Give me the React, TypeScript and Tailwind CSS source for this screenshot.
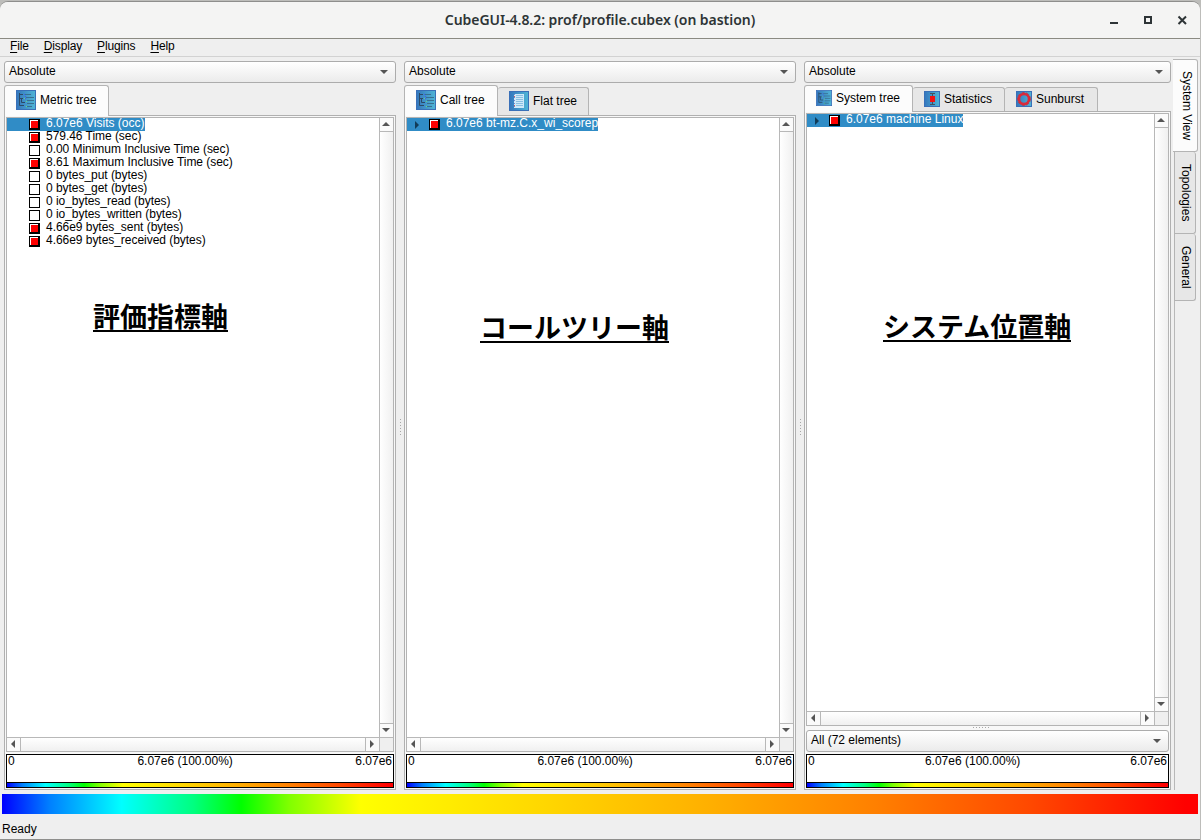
import React from "react";

type Row = { label: string; filled: boolean; selected?: boolean; expandable?: boolean };

const metricRows: Row[] = [
  { label: "6.07e6 Visits (occ)", filled: true, selected: true },
  { label: "579.46 Time (sec)", filled: true },
  { label: "0.00 Minimum Inclusive Time (sec)", filled: false },
  { label: "8.61 Maximum Inclusive Time (sec)", filled: true },
  { label: "0 bytes_put (bytes)", filled: false },
  { label: "0 bytes_get (bytes)", filled: false },
  { label: "0 io_bytes_read (bytes)", filled: false },
  { label: "0 io_bytes_written (bytes)", filled: false },
  { label: "4.66e9 bytes_sent (bytes)", filled: true },
  { label: "4.66e9 bytes_received (bytes)", filled: true },
];
const callRows: Row[] = [{ label: "6.07e6 bt-mz.C.x_wi_scorep", filled: true, selected: true, expandable: true }];
const systemRows: Row[] = [{ label: "6.07e6 machine Linux", filled: true, selected: true, expandable: true }];

const rainbow =
  "bg-[linear-gradient(to_right,#0000ff_0%,#0080ff_4%,#00ffff_10%,#00ff80_16%,#00ff00_20%,#80ff00_24%,#ffff00_30%,#ffd800_45%,#ffb000_59%,#ff8000_73%,#ff4800_86%,#ff0000_99%,#ff0000_100%)]";

function Arrow({ dir }: { dir: "up" | "down" | "left" | "right" }) {
  const points = {
    up: "0,6 4,2 8,6",
    down: "0,2 8,2 4,6",
    left: "2,4 6,0 6,8",
    right: "6,4 2,0 2,8",
  }[dir];
  return (
    <svg width="8" height="8" viewBox="0 0 8 8" className="block shrink-0">
      <polygon points={points} fill="#555" />
    </svg>
  );
}

function Combo({ label }: { label: string }) {
  return (
    <div className="flex h-[22px] shrink-0 items-center justify-between rounded-[3px] border border-[#acacac] bg-gradient-to-b from-white to-[#ebebeb] pl-1 pr-[7px]">
      <span className="relative -top-px">{label}</span>
      <Arrow dir="down" />
    </div>
  );
}

function TreeIcon({ size }: { size: number }) {
  return (
    <svg width={size} height={size} viewBox="0 0 20 20" className="block shrink-0">
      <defs>
        <linearGradient id="tile">
          <stop offset="0" stopColor="#3477bd" />
          <stop offset="1" stopColor="#50b5d6" />
        </linearGradient>
      </defs>
      <rect x=".5" y=".5" width="19" height="19" fill="url(#tile)" stroke="#3a70b8" />
      <path d="M3.500 3v12.500H8M3.500 4.500H7M3.500 8.500H7M5.500 8.500v4H9" fill="none" stroke="#2c4a66" />
      <path d="M9 4.500h6M10 7.500h8M11 10.500h7M11 13.500h7M10 16.500h6" stroke="#386f90" />
      <path d="M8 4.500h1M9 8.500h1M9 6.500h1" stroke="#3f58f0" />
      <path d="M8 8.500h1M10 11.500h1M10 16.500h1" stroke="#62dc78" />
    </svg>
  );
}

function FlatIcon() {
  return (
    <svg width="20" height="20" viewBox="0 0 20 20" className="block shrink-0">
      <rect x=".5" y=".5" width="19" height="19" fill="url(#tile)" stroke="#3a70b8" />
      <rect x="5" y="3" width="10" height="14" fill="#cfe9f8" />
      <path d="M7 4.500h7M7 6.500h7M7 8.500h7M7 10.500h7M7 12.500h7M7 14.500h7" stroke="#8abfe2" />
      <path d="M5.500 3v14" stroke="#7186cf" strokeDasharray="1 2" />
      <path d="M5 5.500h1M5 14.500h1" stroke="#dc5656" />
    </svg>
  );
}

function StatsIcon() {
  return (
    <svg width="16" height="16" viewBox="0 0 16 16" className="block shrink-0">
      <rect x=".5" y=".5" width="15" height="15" fill="url(#tile)" stroke="#3a70b8" />
      <path d="M6 2.500h5M8.500 2.500v11M6 13.500h5" stroke="#44525f" fill="none" />
      <rect x="6" y="5" width="5" height="6" fill="#f01212" />
    </svg>
  );
}

function SunIcon() {
  return (
    <svg width="16" height="16" viewBox="0 0 16 16" className="block shrink-0">
      <rect x=".5" y=".5" width="15" height="15" fill="url(#tile)" stroke="#3a70b8" />
      <circle cx="8" cy="8" r="5" fill="none" stroke="#db2a3a" strokeWidth="2.600" />
      <circle cx="8" cy="8" r="6.400" fill="none" stroke="#c23247" strokeWidth="1" strokeDasharray="3 1.500" />
    </svg>
  );
}

function Tab({ icon, label, active, width }: { icon: React.ReactNode; label: string; active?: boolean; width: string }) {
  return (
    <div
      className={
        "flex items-center gap-1 rounded-t-[3px] border-[#b4b4b4] pb-[2px] pl-[11px] " +
        width +
        (active
          ? " relative -mb-px self-stretch border border-b-0 bg-[#fcfcfc] box-content"
          : " h-[calc(100%-2px)] border border-b-0 border-l-0 bg-[#e7e7e7]")
      }
    >
      {icon}
      <span>{label}</span>
    </div>
  );
}

function Swatch({ filled }: { filled: boolean }) {
  return filled ? (
    <span className="h-[11px] w-[11px] shrink-0 border border-b-2 border-r-2 border-black bg-white pl-px pt-px">
      <span className="block h-full w-full bg-[#ff0000]" />
    </span>
  ) : (
    <span className="h-[11px] w-[11px] shrink-0 border border-black bg-white" />
  );
}

function TreeRow({ row }: { row: Row }) {
  return (
    <div className={"flex h-[13px] w-fit items-start leading-[11px] " + (row.selected ? "bg-[#308cc6] text-white" : "")}>
      <span className="flex h-[13px] w-[22px] shrink-0 items-center pl-[6px]">
        {row.expandable && (
          <svg width="8" height="8" viewBox="0 0 8 8">
            <polygon points="2,0 6,4 2,8" fill="#123c58" />
          </svg>
        )}
      </span>
      <span className="flex pt-px">
        <Swatch filled={row.filled} />
      </span>
      <span className={"whitespace-nowrap pl-[6px] " + (row.selected ? "" : "tracking-[-0.04px]")}>{row.label}</span>
    </div>
  );
}

function TreeView({ rows, children }: { rows: Row[]; children: React.ReactNode }) {
  return (
    <div className="flex min-h-0 flex-1 flex-col border border-[#b4b4b4] bg-white">
      <div className="flex min-h-0 flex-1">
        <div className="flex-1">
          {rows.map((r) => (
            <TreeRow key={r.label} row={r} />
          ))}
          {children}
        </div>
        <div className="flex w-[14px] flex-col border-l border-[#b8b8b8] bg-gradient-to-r from-white to-[#f0f0f0]">
          <div className="flex h-[14px] items-center justify-center border-b border-[#b8b8b8] bg-[#fafafa] pb-[2px] pr-[2px]"><Arrow dir="up" /></div>
          <div className="flex-1" />
          <div className="flex h-[14px] items-center justify-center border-t border-[#b8b8b8] bg-[#fafafa] pb-[2px] pr-[2px]"><Arrow dir="down" /></div>
        </div>
      </div>
      <div className="flex h-[14px] shrink-0 border-t border-[#b8b8b8] bg-gradient-to-b from-white to-[#f0f0f0]">
        <div className="flex w-[14px] items-center justify-center border-r border-[#b8b8b8] bg-[#fafafa] pb-px pr-[2px]"><Arrow dir="left" /></div>
        <div className="flex-1" />
        <div className="flex w-[14px] items-center justify-center border-l border-[#b8b8b8] bg-[#fafafa] pb-px pr-[2px]"><Arrow dir="right" /></div>
        <div className="w-[14px] border-l border-[#b8b8b8] bg-[#efefef]" />
      </div>
    </div>
  );
}

function ValueBar() {
  return (
    <div className="flex h-[34px] shrink-0 flex-col border border-black bg-white">
      <div className="flex flex-1 pl-px pr-px leading-[13px]">
        <span className="w-[7px]">0</span>
        <span className="flex-1 whitespace-nowrap text-center">6.07e6 (100.00%)</span>
        <span>6.07e6</span>
      </div>
      <div className={"h-[5px] border-t border-black " + rainbow} />
    </div>
  );
}

function Panel({ width, tabs, tabHeight, children }: { width: string; tabs: React.ReactNode; tabHeight: string; children: React.ReactNode }) {
  return (
    <section className={"flex flex-col " + width}>
      <Combo label="Absolute" />
      <div className={"mt-[2px] flex shrink-0 items-end " + tabHeight}>{tabs}</div>
      <div className="flex min-h-0 flex-1 flex-col border border-[#b0b0b0] bg-[#f8f8f8] p-px">{children}</div>
    </section>
  );
}

function Grip() {
  return (
    <div className="flex w-2 flex-col items-center gap-[2px] pt-[358px]">
      {[0, 1, 2, 3, 4, 5].map((i) => (
        <span key={i} className="h-px w-px bg-[#a8a8a8]" />
      ))}
    </div>
  );
}

function Note({ children, pos }: { children: string; pos: string }) {
  return (
    <div
      className={
        "w-fit whitespace-nowrap border-b-2 border-black pb-px font-['Noto_Sans_CJK_JP',sans-serif] text-[27px] font-bold leading-[27px] text-black " + pos
      }
    >
      {children}
    </div>
  );
}

function Menu({ label }: { label: string }) {
  return (
    <span className="tracking-[-0.15px]">
      <span className="underline underline-offset-2">{label[0]}</span>
      {label.slice(1)}
    </span>
  );
}

export default function App() {
  return (
    <div className="h-[840px] w-[1201px] overflow-hidden bg-[#bdbdba] pt-px font-['Liberation_Sans',Arial,sans-serif] text-[12px] leading-[14px] text-black">
      <div className="flex h-[839px] w-[1200px] flex-col rounded-t-lg border-b border-t border-[#8e8e8c] bg-[#efefef]">
        <header className="flex h-[37px] shrink-0 items-center rounded-t-lg border-b border-[#8b8a82] bg-[#f4f4f3]">
          <div className="w-[100px]" />
          <h1 className="flex-1 text-center font-['Noto_Sans',sans-serif] text-[14px] font-semibold tracking-[-0.04px] text-[#2e3436]">
            CubeGUI-4.8.2: prof/profile.cubex (on bastion)
          </h1>
          <div className="flex w-[100px] justify-end pr-[13px]">
            <svg width="78" height="12" viewBox="0 0 78 12" fill="none" stroke="#2e3436">
              <path d="M1 9h8" strokeWidth="2" />
              <rect x="36" y="3" width="6" height="6" strokeWidth="2" />
              <path d="m69.500 2.500 7.500 7.500m0-7.500-7.500 7.500" strokeWidth="2" />
            </svg>
          </div>
        </header>
        <nav className="flex h-[18px] shrink-0 gap-[15px] border-b border-[#d2d2d2] pl-[10px]">
          {["File", "Display", "Plugins", "Help"].map((m) => (
            <Menu key={m} label={m} />
          ))}
        </nav>
        <main className="flex h-[733px] shrink-0 pl-1 pt-1">
          <Panel
            width="w-[392px]"
            tabHeight="h-[30px]"
            tabs={<Tab active width="w-[92px]" icon={<TreeIcon size={20} />} label="Metric tree" />}
          >
            <TreeView rows={metricRows}>
              <Note pos="ml-[86px] mt-[54px]">評価指標軸</Note>
            </TreeView>
            <div className="h-[2px] shrink-0" />
            <ValueBar />
          </Panel>
          <Grip />
          <Panel
            width="w-[392px]"
            tabHeight="h-[30px]"
            tabs={
              <>
                <Tab active width="w-[81px]" icon={<TreeIcon size={20} />} label="Call tree" />
                <Tab width="w-[91px]" icon={<FlatIcon />} label="Flat tree" />
              </>
            }
          >
            <TreeView rows={callRows}>
              <Note pos="ml-[73px] mt-[182px]">コールツリー軸</Note>
            </TreeView>
            <div className="h-[2px] shrink-0" />
            <ValueBar />
          </Panel>
          <Grip />
          <Panel
            width="w-[367px]"
            tabHeight="h-[26px]"
            tabs={
              <>
                <Tab active width="w-[96px]" icon={<TreeIcon size={16} />} label="System tree" />
                <Tab width="w-[92px]" icon={<StatsIcon />} label="Statistics" />
                <Tab width="w-[93px]" icon={<SunIcon />} label="Sunburst" />
              </>
            }
          >
            <TreeView rows={systemRows}>
              <Note pos="ml-[76px] mt-[185px]">システム位置軸</Note>
            </TreeView>
            <div className="flex h-1 shrink-0 items-start justify-center gap-[2px] pt-px">
              {[0, 1, 2, 3, 4, 5].map((i) => (
                <span key={i} className="h-px w-px bg-[#a8a8a8]" />
              ))}
              <span className="w-3" />
            </div>
            <Combo label="All (72 elements)" />
            <div className="h-[2px] shrink-0" />
            <ValueBar />
          </Panel>
          <aside className="-mt-[2px] ml-[2px] flex w-[25px] flex-col">
            <div className="flex h-[93px] w-[25px] items-center justify-center rounded-r-[3px] border border-l-0 border-[#b4b4b4] bg-[#fcfcfc] pl-[3px] [writing-mode:vertical-rl]">
              System View
            </div>
            <div className="ml-px flex h-[82px] w-[22px] items-center justify-center rounded-r-[3px] border border-t-0 border-[#b4b4b4] bg-[#e7e7e7] pl-[2px] [writing-mode:vertical-rl]">
              Topologies
            </div>
            <div className="ml-px flex h-[67px] w-[22px] items-center justify-center rounded-r-[3px] border border-t-0 border-[#b4b4b4] bg-[#e7e7e7] pl-[2px] [writing-mode:vertical-rl]">
              General
            </div>
            <div className="ml-px flex-1 border-l border-[#b8b8b8]" />
          </aside>
        </main>
        <div className={"ml-[2px] mt-1 h-5 w-[1196px] shrink-0 " + rainbow} />
        <footer className="flex flex-1 items-end pb-[3px] pl-[2px]">Ready</footer>
      </div>
    </div>
  );
}
